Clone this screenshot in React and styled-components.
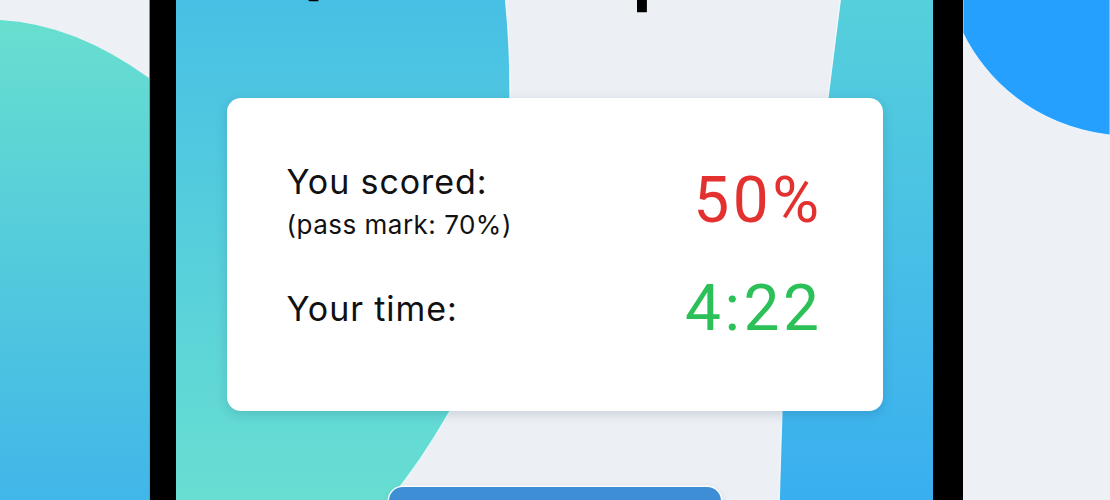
import React from "react";
import styled, { createGlobalStyle } from "styled-components";

const Global = createGlobalStyle`
  html, body { margin: 0; padding: 0; background: #edf1f6; }
  body { font-family: "Inter", "Noto Sans", sans-serif; overflow: hidden; }
  * { box-sizing: border-box; }
`;

const Page = styled.div`
  display: flex;
  width: 1110px;
  height: 500px;
  overflow: hidden;
  background: #edf1f6;
`;

const Side = styled.div`
  position: relative;
  flex: 0 0 ${(p) => p.$w}px;
  height: 500px;
  overflow: hidden;
`;

const Bezel = styled.div`
  flex: 0 0 ${(p) => p.$w}px;
  height: 500px;
  background: #000;
  border-left: ${(p) => (p.$edge === "left" ? "1px solid #8a8d90" : "none")};
`;

const Screen = styled.div`
  position: relative;
  flex: 0 0 757px;
  height: 500px;
  overflow: hidden;
  background: #ecf0f5;
`;

const Backdrop = styled.svg`
  position: absolute;
  inset: 0;
  width: 100%;
  height: 100%;
  display: block;
`;

const Content = styled.div`
  position: relative;
  z-index: 1;
  display: flex;
  flex-direction: column;
  align-items: center;
`;

const Title = styled.h1`
  margin: -71px 0 0;
  font-family: "Inter", "Noto Sans", sans-serif;
  font-weight: 600;
  font-size: 78px;
  line-height: 1;
  color: #000;
  white-space: nowrap;
`;

const Card = styled.section`
  margin-top: 91px;
  width: 656px;
  height: 313px;
  padding: 64px 60px 0 60px;
  background: #fff;
  border-radius: 14px;
  box-shadow: 0 3px 12px rgba(20, 40, 60, 0.16);
  display: grid;
  grid-template-columns: 1fr auto;
  row-gap: 37px;
  align-content: start;
`;

const Row = styled.div`
  grid-column: 1 / -1;
  display: flex;
  align-items: center;
  justify-content: space-between;
`;

const LabelGroup = styled.div`
  display: flex;
  flex-direction: column;
  gap: 6px;
`;

const Label = styled.div`
  font-size: 34px;
  line-height: 1.2;
  letter-spacing: 0.9px;
  color: #111;
`;

const Note = styled.div`
  font-size: 26px;
  line-height: 1.2;
  letter-spacing: 0.5px;
  color: #111;
`;

const Value = styled.div`
  font-family: "Roboto", "Liberation Sans", sans-serif;
  font-size: 64px;
  line-height: 1;
  letter-spacing: 3.5px;
  margin-right: 0;
  color: ${(p) => p.$color};
`;

const Action = styled.button`
  margin-top: 76px;
  width: 332px;
  height: 60px;
  border: none;
  border-radius: 14px;
  background: #3d8ed4;
  box-shadow: 0 0 0 1.5px rgba(255, 255, 255, 0.85), 0 2px 8px rgba(0, 0, 0, 0.12);
  color: #fff;
  font-family: "Inter", sans-serif;
  font-size: 24px;
  line-height: 1;
`;

function LeftOutside() {
  return (
    <Backdrop viewBox="0 0 150 500" preserveAspectRatio="none">
      <defs>
        <linearGradient id="lo" x1="0" y1="0" x2="0" y2="1">
          <stop offset="0" stopColor="#67dfcf" />
          <stop offset="1" stopColor="#41b6e9" />
        </linearGradient>
      </defs>
      <path d="M0 20 Q 75 24 150 78 L150 500 L0 500 Z" fill="url(#lo)" />
    </Backdrop>
  );
}

function RightOutside() {
  return (
    <Backdrop viewBox="0 0 147 500" preserveAspectRatio="none">
      <path
        d="M0 -2 L0 33 C 22 78, 70 126, 147 135 L147 -2 Z"
        fill="#26a0fe"
        stroke="rgba(255,255,255,0.7)"
        strokeWidth="1"
      />
    </Backdrop>
  );
}

function ScreenBlobs() {
  return (
    <Backdrop viewBox="0 0 757 500" preserveAspectRatio="none">
      <defs>
        <linearGradient id="sl" x1="0" y1="0" x2="0" y2="1">
          <stop offset="0" stopColor="#47bfe5" />
          <stop offset="1" stopColor="#68dfd1" />
        </linearGradient>
        <linearGradient id="sr" x1="0" y1="0" x2="0" y2="1">
          <stop offset="0" stopColor="#56d0db" />
          <stop offset="1" stopColor="#39aef0" />
        </linearGradient>
      </defs>
      <path
        d="M-5 -5 L329 -5 C 342 120, 330 300, 274 411 C 262 432, 240 470, 205 510 L-5 510 Z"
        fill="url(#sl)"
        stroke="rgba(255,255,255,0.8)"
        strokeWidth="1.2"
      />
      <path
        d="M665 -5 L652 98 C 640 200, 612 330, 606 411 L603 510 L762 510 L762 -5 Z"
        fill="url(#sr)"
        stroke="rgba(255,255,255,0.8)"
        strokeWidth="1.2"
      />
    </Backdrop>
  );
}

export default function App() {
  return (
    <>
      <Global />
      <Page>
        <Side $w={149}>
          <LeftOutside />
        </Side>
        <Bezel $w={27} $edge="left" />
        <Screen>
          <ScreenBlobs />
          <Content>
            <Title>Quiz Complete!</Title>
            <Card>
              <Row>
                <LabelGroup>
                  <Label>You scored:</Label>
                  <Note>(pass mark: 70%)</Note>
                </LabelGroup>
                <Value $color="#e2312f">50%</Value>
              </Row>
              <Row>
                <Label>Your time:</Label>
                <Value $color="#2cc158">4:22</Value>
              </Row>
            </Card>
            <Action>Try again</Action>
          </Content>
        </Screen>
        <Bezel $w={30} />
        <Side $w={147}>
          <RightOutside />
        </Side>
      </Page>
    </>
  );
}
